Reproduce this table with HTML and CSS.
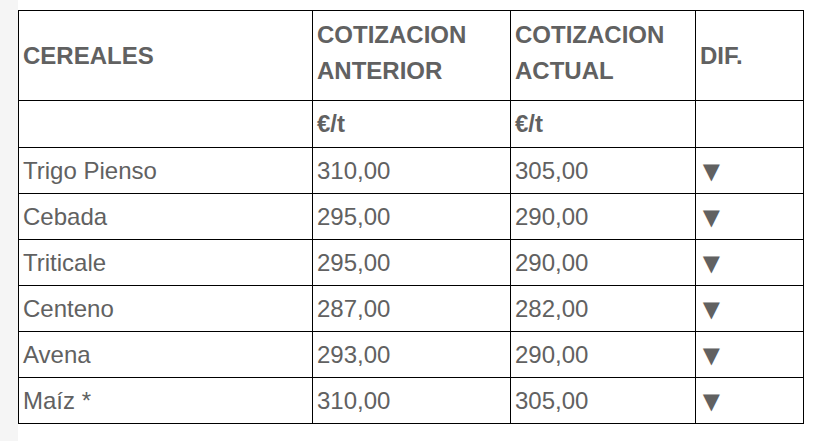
FILE: index.html
```html
<!DOCTYPE html>
<html lang="es">
<head>
<meta charset="utf-8">
<title>Cotizaciones cereales</title>
<link rel="stylesheet" href="styles.css">
</head>
<body>
<div class="page">
  <aside class="rail"></aside>
  <main class="content">
    <table class="prices">
      <colgroup>
        <col class="c1"><col class="c2"><col class="c3"><col class="c4">
      </colgroup>
      <thead>
        <tr class="head">
          <th>CEREALES</th>
          <th class="two">COTIZACION<br>ANTERIOR</th>
          <th class="two">COTIZACION<br>ACTUAL</th>
          <th>DIF.</th>
        </tr>
        <tr class="unit">
          <th></th>
          <th>€/t</th>
          <th>€/t</th>
          <th></th>
        </tr>
      </thead>
      <tbody>
        <tr><td>Trigo Pienso</td><td>310,00</td><td>305,00</td><td class="dif">▼</td></tr>
        <tr><td>Cebada</td><td>295,00</td><td>290,00</td><td class="dif">▼</td></tr>
        <tr><td>Triticale</td><td>295,00</td><td>290,00</td><td class="dif">▼</td></tr>
        <tr><td>Centeno</td><td>287,00</td><td>282,00</td><td class="dif">▼</td></tr>
        <tr><td>Avena</td><td>293,00</td><td>290,00</td><td class="dif">▼</td></tr>
        <tr><td>Maíz *</td><td>310,00</td><td>305,00</td><td class="dif">▼</td></tr>
      </tbody>
    </table>
  </main>
</div>
</body>
</html>
```

FILE: styles.css
```css
html, body {
  margin: 0;
  padding: 0;
  background: #ffffff;
}

.page {
  display: flex;
  min-height: 441px;
}

.rail {
  width: 18px;
  flex: 0 0 18px;
  background: #f5f5f5;
}

.content {
  flex: 1;
  padding-top: 10px;
}

.prices {
  border-collapse: collapse;
  table-layout: fixed;
  width: 785px;
  font-family: "Liberation Sans", Arial, sans-serif;
  color: #616161;
}

.c1 { width: 294px; }
.c2 { width: 198px; }
.c3 { width: 185px; }
.c4 { width: 108px; }

.prices th,
.prices td {
  border: 1px solid #000000;
  padding: 0 4px;
  text-align: left;
  vertical-align: middle;
}

.prices th {
  font-weight: bold;
  font-size: 24px;
  line-height: 36px;
}

.prices td {
  font-weight: normal;
  font-size: 24px;
  line-height: 36px;
}

.head th {
  height: 89px;
}

.head th.two {
  padding-bottom: 6px;
  height: 83px;
}

.unit th {
  height: 46px;
}

.prices tbody td {
  height: 45px;
}

.prices td.dif {
  font-size: 29px;
  padding-left: 1px;
}
```
